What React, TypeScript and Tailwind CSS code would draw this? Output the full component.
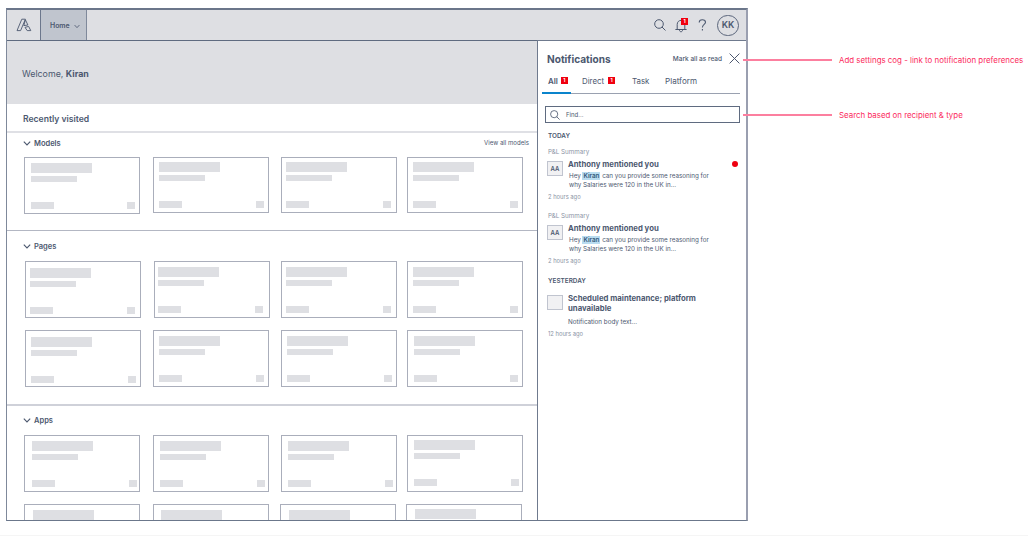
import type { ReactNode } from 'react';
import clsx from 'clsx';

interface TileSpec {
  card: string;
  inner: string;
}

interface NotificationProps {
  source?: string;
  initials?: string;
  title: ReactNode;
  time: string;
  unread?: boolean;
  children: ReactNode;
}

const modelTiles: TileSpec[] = [
  { card: 'ml-[24px] h-[57px]', inner: 'pl-[6px] pt-[5px] pr-[4px]' },
  { card: 'ml-[13px] h-[56px]', inner: 'pl-[5px] pt-[4px] pr-[4px]' },
  { card: 'ml-[12px] h-[56px]', inner: 'pl-[4px] pt-[4px] pr-[5px]' },
  { card: 'ml-[10px] h-[56px]', inner: 'pl-[5px] pt-[4px] pr-[4px]' },
];

const pageTiles: TileSpec[] = [
  { card: 'ml-[25px] h-[57px]', inner: 'pl-[4px] pt-[6px] pr-[5px]' },
  { card: 'ml-[13px] h-[57px]', inner: 'pl-[3px] pt-[5px] pr-[6px]' },
  { card: 'ml-[11px] h-[57px]', inner: 'pl-[4px] pt-[5px] pr-[5px]' },
  { card: 'ml-[10px] h-[57px]', inner: 'pl-[5px] pt-[5px] pr-[4px]' },
];

const morePageTiles: TileSpec[] = [
  { card: 'ml-[25px] h-[57px]', inner: 'pl-[5px] pt-[6px] pr-[4px]' },
  { card: 'ml-[12px] h-[57px]', inner: 'pl-[5px] pt-[5px] pr-[4px]' },
  { card: 'ml-[12px] h-[57px]', inner: 'pl-[5px] pt-[5px] pr-[4px]' },
  { card: 'ml-[10px] h-[57px]', inner: 'pl-[6px] pt-[5px] pr-[4px]' },
];

const appTiles: TileSpec[] = [
  { card: 'ml-[24px] h-[57px]', inner: 'pl-[7px] pt-[5px] pr-[2px]' },
  { card: 'ml-[13px] h-[57px]', inner: 'pl-[6px] pt-[5px] pr-[3px]' },
  { card: 'ml-[12px] h-[57px]', inner: 'pl-[6px] pt-[5px] pr-[3px]' },
  { card: 'ml-[10px] h-[57px]', inner: 'pl-[6px] pt-[4px] pr-[3px]' },
];

const moreAppTiles: TileSpec[] = [
  { card: 'ml-[24px] h-[57px]', inner: 'pl-[8px] pt-[5px] pr-[2px]' },
  { card: 'ml-[13px] h-[57px]', inner: 'pl-[7px] pt-[5px] pr-[3px]' },
  { card: 'ml-[11px] h-[57px]', inner: 'pl-[8px] pt-[5px] pr-[3px]' },
  { card: 'ml-[10px] h-[57px]', inner: 'pl-[8px] pt-[4px] pr-[3px]' },
];

function Tile({ card, inner }: TileSpec) {
  return (
    <div className={clsx('w-[116px] shrink-0 border border-[#aaaebb]', card)}>
      <div className={inner}>
        <div className="h-[10px] w-[61px] bg-[#dedfe3]" />
        <div className="mt-[3px] h-[6px] w-[46px] bg-[#dedfe3]" />
        <div className="mt-[20px] flex justify-between">
          <div className="h-[7px] w-[23px] bg-[#dedfe3]" />
          <div className="h-[7px] w-[8px] bg-[#dedfe3]" />
        </div>
      </div>
    </div>
  );
}

function TileRow({ tiles, className }: { tiles: TileSpec[]; className?: string }) {
  return (
    <div className={clsx('-ml-[7px] flex', className)}>
      {tiles.map((tile, index) => (
        <Tile key={index} {...tile} />
      ))}
    </div>
  );
}

function Chevron() {
  return (
    <svg className="h-[5px] w-[8px]" viewBox="0 0 8 5" fill="none" stroke="currentColor" strokeWidth="1.1">
      <path d="M0.8 0.6 L4 4 L7.2 0.6" />
    </svg>
  );
}

function SearchIcon({ className }: { className?: string }) {
  return (
    <svg className={className} viewBox="0 0 12 12" fill="none" stroke="currentColor" strokeWidth="1">
      <circle cx="5" cy="5" r="4.3" />
      <path d="M8 8 L11.5 11.5" />
    </svg>
  );
}

function SectionTitle({ title, link }: { title: string; link?: string }) {
  return (
    <div className="flex h-[10px] items-center pl-[16px] pr-[8px]">
      <Chevron />
      <span className="ml-[3px] pt-px text-[7.5px] font-semibold leading-[10px]">{title}</span>
      {link && <span className="ml-auto text-[6.1px] leading-[10px]">{link}</span>}
    </div>
  );
}

function Count() {
  return (
    <span className="flex h-[7px] w-[7px] items-center justify-center bg-[#f0000f] text-[5px] font-bold leading-none text-white">
      1
    </span>
  );
}

function Notification({ source, initials, title, time, unread, children }: NotificationProps) {
  return (
    <article className="pl-[10px]">
      {source && <p className="mb-[3px] h-[8px] text-[6.25px] leading-[8px] text-[#8c94a5]">{source}</p>}
      <div className="flex">
        <div className="-ml-px mt-[2px] flex h-[15px] w-[16px] shrink-0 items-center justify-center border border-[#c0c4cf] bg-[#f1f1f3] text-[6px] font-semibold">
          {initials}
        </div>
        <div className="ml-[5px]">
          <h3 className="text-[7.75px] font-bold leading-[10px]">{title}</h3>
          <div className="mt-[3px] whitespace-nowrap pl-px text-[6.27px] leading-[8.5px]">{children}</div>
        </div>
        {unread && <span className="ml-auto mr-[8px] mt-[2px] h-[6px] w-[6px] rounded-full bg-[#ee0010]" />}
      </div>
      <p className="mt-[4px] h-[8px] text-[5.8px] leading-[8px] text-[#8c94a5]">{time}</p>
    </article>
  );
}

function Mention() {
  return (
    <>
      Hey <span className="bg-[#b9dcf0] px-[1px] font-semibold text-[#35587a]">Kiran</span> can you provide some
      reasoning for
      <br />
      why Salaries were 120 in the UK in...
    </>
  );
}

function Header() {
  return (
    <header className="flex h-[31px] shrink-0 border-b border-[#5f6b80] bg-[#dedfe3]">
      <div className="flex w-[34px] items-center justify-center border-r border-[#6c778c]">
        <svg
          className="h-[14px] w-[16px]"
          viewBox="0 0 16 14"
          fill="none"
          stroke="currentColor"
          strokeWidth="0.9"
          strokeLinejoin="round"
        >
          <path d="M1 12.6 L5.8 1.2 H9.4 L4.6 12.6 Z" />
          <path d="M9.4 1.8 L11.9 7 L7.8 7.6 Z" />
          <path d="M9 9.4 L12.6 8.4 L14.8 12.6 H11.2 Z" />
        </svg>
      </div>
      <div className="flex w-[46px] items-center border-r border-[#7f899b] bg-[#c0c5ce] pl-[9px]">
        <span className="pt-px text-[6.9px] font-semibold leading-[10px]">Home</span>
        <span className="ml-[3px] mt-[2px] scale-75">
          <Chevron />
        </span>
      </div>
      <div className="ml-auto flex items-center pr-[7px]">
        <SearchIcon className="h-[12px] w-[12px]" />
        <div className="relative ml-[9px] mr-px mt-px h-[14px] w-[12px]">
          <svg className="h-[14px] w-[12px]" viewBox="0 0 12 14" fill="none" stroke="currentColor" strokeWidth="1">
            <path d="M0.4 10.5 H11.6 M2.2 10.5 V5.5 C2.2 2.8 4 1.4 6 1.4 C8 1.4 9.8 2.8 9.8 5.5 V10.5 M4.4 10.8 C4.4 13.4 7.6 13.4 7.6 10.8" />
          </svg>
          <span className="absolute -top-px left-[6px] flex h-[7px] w-[7px] items-center justify-center bg-[#f0000f] text-[5px] font-bold leading-none text-white">
            1
          </span>
        </div>
        <svg className="ml-[10px] h-[12px] w-[9px]" viewBox="0 0 9 12" fill="none" stroke="currentColor" strokeWidth="1.1">
          <path d="M1.2 3.6 C1.2 1.6 2.6 0.8 4.3 0.8 C6.2 0.8 7.5 1.8 7.5 3.3 C7.5 5.5 4.4 5.4 4.4 8.4 M4.4 9.9 V11.4" />
        </svg>
        <div className="ml-[10px] flex h-[21px] w-[22px] items-center justify-center rounded-full border border-[#5a657b] text-[9px] font-semibold">
          KK
        </div>
      </div>
    </header>
  );
}

function NotificationPanel() {
  return (
    <aside className="-mt-px flex w-[209px] flex-col border-l border-t border-[#6f7a8e] bg-white">
      <div className="flex h-[35px] items-center pl-[9px] pr-[6px]">
        <h2 className="text-[10.1px] font-bold leading-[12px]">Notifications</h2>
        <span className="ml-auto text-[6.5px] font-medium leading-[10px]">Mark all as read</span>
        <svg className="ml-[7px] h-[11px] w-[11px]" viewBox="0 0 11 11" fill="none" stroke="currentColor" strokeWidth="1">
          <path d="M0.6 0.6 L10.4 10.4 M10.4 0.6 L0.6 10.4" />
        </svg>
      </div>
      <nav className="ml-[4px] mr-[6px] flex h-[18px] border-b border-[#9aa1b0] text-[7.9px] leading-[10px]">
        <div className="flex h-[18px] w-[29px] border-b-2 border-[#0a84cc] pl-[6px] font-semibold">
          All
          <span className="ml-[3px] mt-[1px]">
            <Count />
          </span>
        </div>
        <div className="ml-[11px] flex w-[50px]">
          Direct
          <span className="ml-[4px] mt-[1px]">
            <Count />
          </span>
        </div>
        <div className="w-[33px]">Task</div>
        <div className="text-[8.1px]">Platform</div>
      </nav>
      <div className="ml-[7px] mt-[12px] flex h-[17px] w-[195px] items-center border border-[#5f6b80] pl-[4px]">
        <SearchIcon className="h-[10px] w-[10px]" />
        <span className="ml-[6px] pt-px text-[6px] leading-[10px]">Find...</span>
      </div>
      <h4 className="mt-[8px] h-[10px] pl-[10px] text-[6.4px] font-semibold leading-[10px]">TODAY</h4>
      <div className="mt-[7px] flex flex-col gap-[11px]">
        <Notification source="P&L Summary" initials="AA" title="Anthony mentioned you" time="2 hours ago" unread>
          <Mention />
        </Notification>
        <Notification source="P&L Summary" initials="AA" title="Anthony mentioned you" time="2 hours ago">
          <Mention />
        </Notification>
      </div>
      <h4 className="mb-[7px] mt-[11px] h-[10px] pl-[10px] text-[6.4px] font-semibold leading-[10px]">YESTERDAY</h4>
      <Notification
        title={
          <>
            Scheduled maintenance; platform
            <br />
            unavailable
          </>
        }
        time="12 hours ago"
      >
        <p className="-mb-px -ml-px pt-[2px]">Notification body text...</p>
      </Notification>
    </aside>
  );
}

function Annotation({ children }: { children: ReactNode }) {
  return (
    <div className="flex h-[10px] items-center whitespace-nowrap text-[7.9px] leading-[10px] text-[#fb2b5d]">
      <span className="relative -ml-[5px] mr-[7px] h-[1.5px] w-[89px] shrink-0 bg-[#fc7f9f]" />
      {children}
    </div>
  );
}

export default function App() {
  return (
    <div className="flex h-[536px] w-[1028px] overflow-hidden border-b border-[#f5f5f5] bg-white pl-[6px] pt-[8px] font-['Inter','Liberation_Sans',sans-serif] text-[#4c586f]">
      <div className="flex h-[513px] w-[742px] shrink-0 flex-col overflow-hidden border-b border-l border-r-2 border-t-2 border-b-[#6b778b] border-l-[#7f899b] border-r-[#9a9fb0] border-t-[#6b768a]">
        <Header />
        <div className="flex min-h-0 flex-1">
          <main className="min-w-0 flex-1 overflow-hidden">
            <div className="flex h-[63px] items-center bg-[#dedfe3] pl-[15px] pt-[2px] text-[8.85px]">
              <p>
                Welcome, <span className="font-bold">Kiran</span>
              </p>
            </div>
            <div className="flex h-[29px] items-center border-b-2 border-[#dfe0e5] pl-[16px] pt-[3px] text-[8.6px] font-semibold">
              Recently visited
            </div>
            <section className="h-[98px] border-b border-[#b3b7c3] pt-[5px]">
              <SectionTitle title="Models" link="View all models" />
              <TileRow tiles={modelTiles} className="mt-[9px]" />
            </section>
            <section className="h-[175px] border-b-2 border-[#cfd1d9] pt-[10px]">
              <SectionTitle title="Pages" />
              <TileRow tiles={pageTiles} className="mt-[10px]" />
              <TileRow tiles={morePageTiles} className="mt-[12px]" />
            </section>
            <section className="pt-[9px]">
              <SectionTitle title="Apps" />
              <TileRow tiles={appTiles} className="mt-[10px]" />
              <TileRow tiles={moreAppTiles} className="mt-[12px]" />
            </section>
          </main>
          <NotificationPanel />
        </div>
      </div>
      <div className="pt-[47px]">
        <Annotation>Add settings cog - link to notification preferences</Annotation>
        <div className="h-[45px]" />
        <Annotation>Search based on recipient &amp; type</Annotation>
      </div>
    </div>
  );
}
